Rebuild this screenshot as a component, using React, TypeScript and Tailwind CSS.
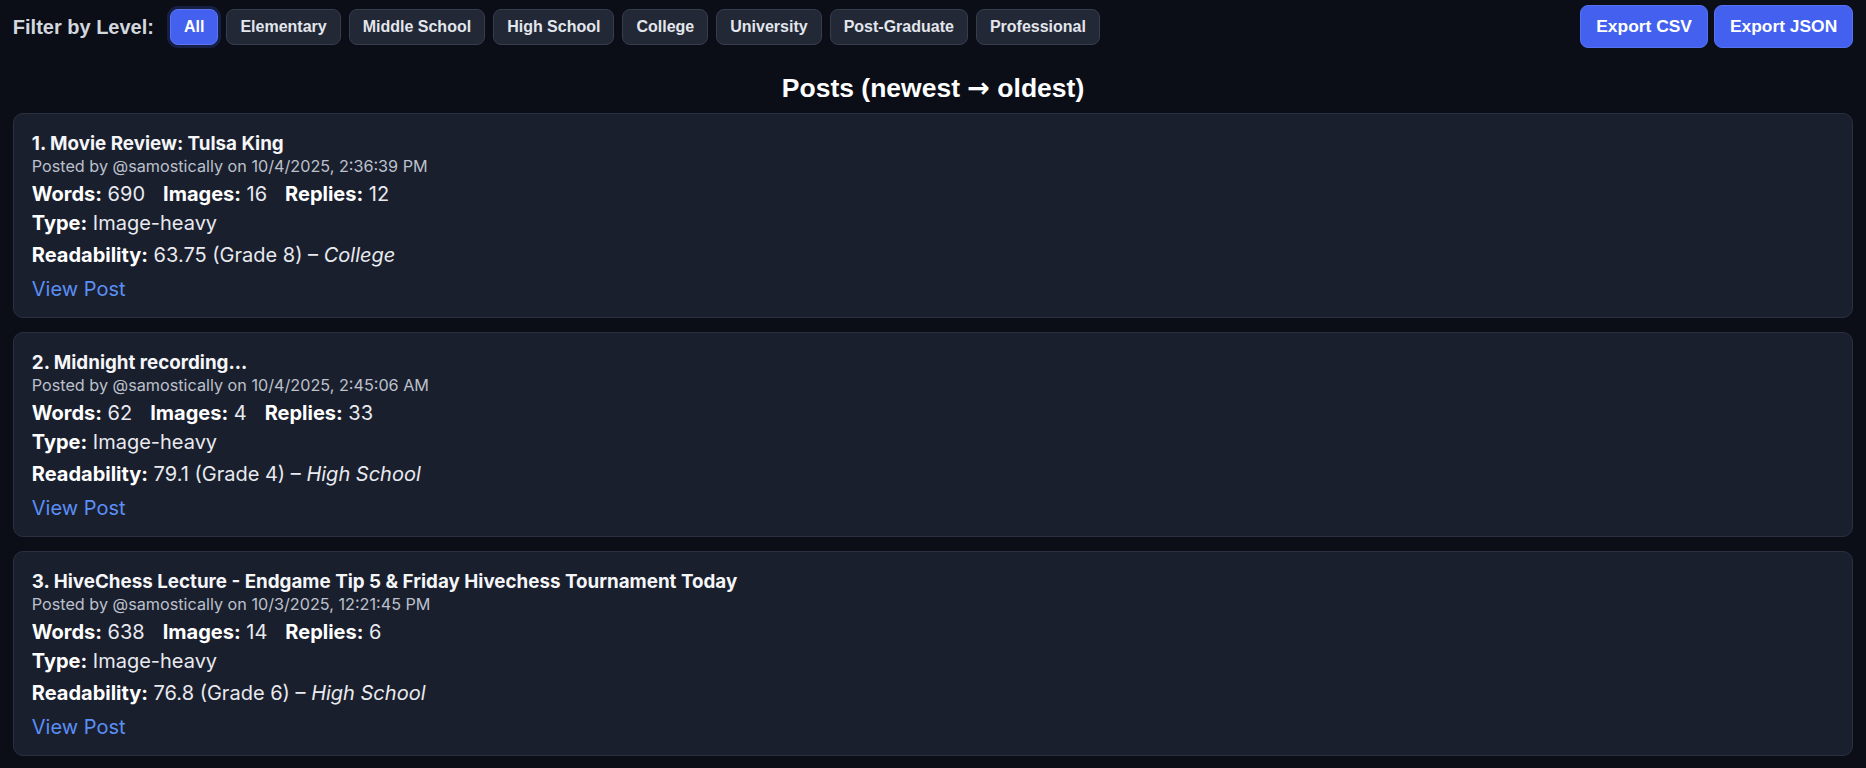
import React from "react";

const levels = [
  "All",
  "Elementary",
  "Middle School",
  "High School",
  "College",
  "University",
  "Post-Graduate",
  "Professional",
];

type Post = {
  title: string;
  date: string;
  words: number;
  images: number;
  replies: number;
  type: string;
  score: string;
  grade: number;
  level: string;
};

const posts: Post[] = [
  {
    title: "1. Movie Review: Tulsa King",
    date: "10/4/2025, 2:36:39 PM",
    words: 690,
    images: 16,
    replies: 12,
    type: "Image-heavy",
    score: "63.75",
    grade: 8,
    level: "College",
  },
  {
    title: "2. Midnight recording...",
    date: "10/4/2025, 2:45:06 AM",
    words: 62,
    images: 4,
    replies: 33,
    type: "Image-heavy",
    score: "79.1",
    grade: 4,
    level: "High School",
  },
  {
    title: "3. HiveChess Lecture - Endgame Tip 5 & Friday Hivechess Tournament Today",
    date: "10/3/2025, 12:21:45 PM",
    words: 638,
    images: 14,
    replies: 6,
    type: "Image-heavy",
    score: "76.8",
    grade: 6,
    level: "High School",
  },
];

function PostCard({ p }: { p: Post }) {
  return (
    <div className="h-[205px] rounded-[10px] border border-[#2a3040] bg-[#1a1f2e] px-[18px] pt-[18px] font-['Inter',sans-serif]">
      <div className="h-[24px] text-[18.8px] leading-[24px] font-bold text-[#f5f6f8]">
        {p.title}
      </div>
      <div className="h-[20px] text-[16.2px] leading-[20px] text-[#bcc1cb]">
        Posted by @samostically on {p.date}
      </div>
      <div className="mt-[4px] flex h-[29px] items-center gap-[18px] text-[20px] leading-[29px] text-[#e8eaee]">
        <span>
          <b className="font-bold text-white">Words:</b> {p.words}
        </span>
        <span>
          <b className="font-bold text-white">Images:</b> {p.images}
        </span>
        <span>
          <b className="font-bold text-white">Replies:</b> {p.replies}
        </span>
      </div>
      <div className="h-[29px] text-[20px] leading-[29px] text-[#e8eaee]">
        <b className="font-bold text-white">Type:</b> {p.type}
      </div>
      <div className="mt-[3px] h-[29px] text-[20px] leading-[29px] text-[#e8eaee]">
        <b className="font-bold text-white">Readability:</b> {p.score} (Grade {p.grade}) –{" "}
        <i className="italic">{p.level}</i>
      </div>
      <div className="mt-[5px] h-[29px] text-[20px] leading-[29px]">
        <a href="#" className="text-[#5b8ff5] no-underline">
          View Post
        </a>
      </div>
    </div>
  );
}

export default function App() {
  return (
    <div className="min-h-screen bg-[#0b0d17] px-[12.8px] pt-[5px] font-['Liberation_Sans',Arial,sans-serif]">
      <div className="flex h-[43px] items-center justify-between">
        <div className="flex items-center gap-[8px]">
          <span className="mr-[8px] text-[20px] font-semibold text-[#d3d7de]">
            Filter by Level:
          </span>
          {levels.map((l, i) =>
            i === 0 ? (
              <button
                key={l}
                className="h-[36px] rounded-[8px] border border-[#5a76f2] bg-[#4361ee] px-[13px] text-[16px] font-bold text-white shadow-[0_0_0_3px_rgba(67,97,238,0.22)]"
              >
                {l}
              </button>
            ) : (
              <button
                key={l}
                className="h-[36px] rounded-[8px] border border-[#363d4c] bg-[#222836] px-[13px] text-[16px] font-bold text-[#e3e6ec]"
              >
                {l}
              </button>
            )
          )}
        </div>
        <div className="flex items-center gap-[6px]">
          <button className="h-[43px] rounded-[8px] border border-[#5573f0] bg-[#4361ee] px-[15px] text-[17.4px] font-bold text-white">
            Export CSV
          </button>
          <button className="h-[43px] rounded-[8px] border border-[#5573f0] bg-[#4361ee] px-[15px] text-[17.4px] font-bold text-white">
            Export JSON
          </button>
        </div>
      </div>
      <h2 className="mt-[25px] h-[30px] text-center text-[26.5px] leading-[30px] font-bold text-white">
        Posts (newest{" "}
        <span className="font-['DejaVu_Sans',sans-serif] text-[27px] font-bold">→</span> oldest)
      </h2>
      <div className="mt-[10px] flex flex-col gap-[14px] pb-[12px]">
        {posts.map((p) => (
          <PostCard key={p.title} p={p} />
        ))}
      </div>
    </div>
  );
}
